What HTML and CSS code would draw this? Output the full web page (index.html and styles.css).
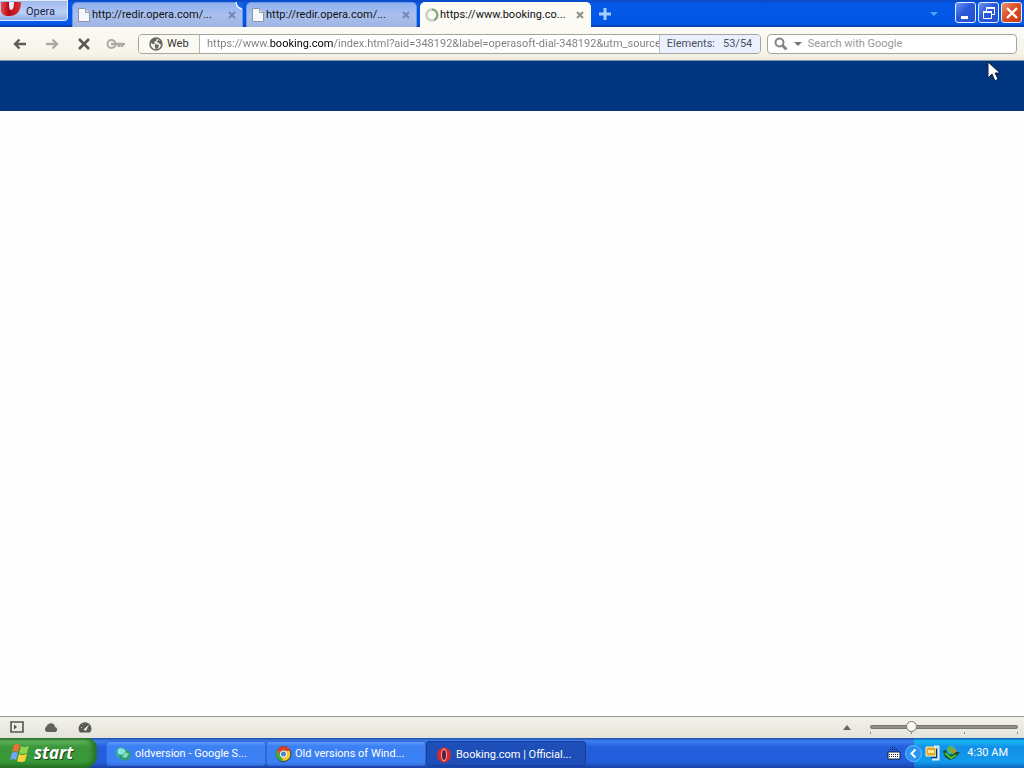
FILE: index.html
```html
<!DOCTYPE html>
<html lang="en">
<head>
<meta charset="utf-8">
<title>Booking.com | Official site</title>
<link rel="stylesheet" href="styles.css">
</head>
<body>
<header class="titlebar">
  <button class="opera-menu" type="button">
    <svg class="opera-mark" width="22" height="17" viewBox="0 0 22 17" aria-hidden="true"><defs><linearGradient id="red" x1="0" x2="1"><stop offset="0" stop-color="#e84a50"/><stop offset=".4" stop-color="#b80812"/><stop offset="1" stop-color="#de3038"/></linearGradient></defs><path d="M1 1H21C21 10 17 15 9 15C4 15 1 13 1 9Z" fill="url(#red)"/><path d="M9 1H14C14 6 13 9 11 9C9 9 9 5 9 1Z" fill="#e4ebfa"/></svg>
    <span>Opera</span>
  </button>
  <nav class="tabs" aria-label="Tabs">
    <div class="tab">
      <svg width="14" height="16" viewBox="0 0 14 16" aria-hidden="true"><path d="M1.500 1.500H8.500L12.500 5.500V14.500H1.500Z" fill="#f6f8fc" stroke="#8d95a4"/><path d="M8.500 1.500V5.500H12.500" fill="#d6dbe5" stroke="#9aa2b0"/></svg>
      <a class="tab-title" href="#">http://redir.opera.com/...</a>
      <button class="tab-close" type="button" aria-label="Close tab"><svg width="8" height="8" viewBox="0 0 8 8"><path d="M1 1L7 7M7 1L1 7" stroke="#7488b2" stroke-width="2"/></svg></button>
      <svg class="curl" width="8" height="8" viewBox="0 0 8 8" aria-hidden="true"><path d="M0 0C1 5 3 6 8 7V0Z" fill="#1760e0"/><path d="M1 0C1 4 3 6 7 7" fill="none" stroke="#eef4ff" stroke-width="1.500"/></svg>
    </div>
    <div class="tab">
      <svg width="14" height="16" viewBox="0 0 14 16" aria-hidden="true"><path d="M1.500 1.500H8.500L12.500 5.500V14.500H1.500Z" fill="#f6f8fc" stroke="#8d95a4"/><path d="M8.500 1.500V5.500H12.500" fill="#d6dbe5" stroke="#9aa2b0"/></svg>
      <a class="tab-title" href="#">http://redir.opera.com/...</a>
      <button class="tab-close" type="button" aria-label="Close tab"><svg width="8" height="8" viewBox="0 0 8 8"><path d="M1 1L7 7M7 1L1 7" stroke="#7488b2" stroke-width="2"/></svg></button>
    </div>
    <div class="tab tab-active">
      <svg width="14" height="16" viewBox="0 0 14 16" aria-hidden="true"><circle cx="7" cy="8" r="5.500" fill="none" stroke="#c9d2c4" stroke-width="2.500"/><path d="M7 2.500A5.500 5.500 0 0 1 9 13" fill="none" stroke="#86a37c" stroke-width="2"/></svg>
      <a class="tab-title" href="#">https://www.booking.co...</a>
      <button class="tab-close" type="button" aria-label="Close tab"><svg width="8" height="8" viewBox="0 0 8 8"><path d="M1 1L7 7M7 1L1 7" stroke="#8f8f8b" stroke-width="2"/></svg></button>
    </div>
  </nav>
  <button class="bare new-tab" type="button" aria-label="New tab"><svg width="12" height="12" viewBox="0 0 12 12"><path d="M6 0V12M0 6H12" stroke="#a8ccff" stroke-width="3"/></svg></button>
  <button class="bare closed-tabs" type="button" aria-label="Closed tabs"><svg width="8" height="4" viewBox="0 0 8 4"><path d="M0 0H8L4 4Z" fill="#4da1fb"/></svg></button>
  <div class="window-buttons">
    <button class="win" type="button" aria-label="Minimize"><svg width="18" height="18" viewBox="0 0 18 18"><path d="M4 12H11V15H4Z" fill="#fff"/></svg></button>
    <button class="win" type="button" aria-label="Restore"><svg width="18" height="18" viewBox="0 0 18 18"><path d="M6.500 7V4H14.500V10.500H12M3.500 8H11.500V14.500H3.500Z" fill="none" stroke="#fff"/><path d="M6 4H15M3 8H12" stroke="#fff" stroke-width="2"/></svg></button>
    <button class="win win-close" type="button" aria-label="Close"><svg width="18" height="18" viewBox="0 0 18 18"><path d="M4 4L14 14M14 4L4 14" stroke="#fff" stroke-width="2.400"/></svg></button>
  </div>
</header>

<div class="toolbar">
  <div class="nav-buttons">
    <button class="bare" type="button" aria-label="Back"><svg width="16" height="14" viewBox="0 0 16 14"><path d="M7.500 2.500L3 7L7.500 11.500M3 7H14" fill="none" stroke="#5c5c58" stroke-width="2.300"/></svg></button>
    <button class="bare" type="button" aria-label="Forward"><svg width="16" height="14" viewBox="0 0 16 14"><path d="M8.500 2.500L13 7L8.500 11.500M13 7H2" fill="none" stroke="#aaaaa4" stroke-width="2.300"/></svg></button>
    <button class="bare" type="button" aria-label="Stop"><svg width="16" height="14" viewBox="0 0 16 14"><path d="M3 2L13 12M13 2L3 12" stroke="#595955" stroke-width="2.600"/></svg></button>
    <button class="bare" type="button" aria-label="Wand"><svg width="20" height="12" viewBox="0 0 20 12"><circle cx="5.500" cy="6" r="4" fill="none" stroke="#aaaaa4" stroke-width="2"/><path d="M5 6H19M13 7V9M16 7V9" stroke="#aaaaa4" stroke-width="2.500"/></svg></button>
  </div>
  <div class="address">
    <button class="badge" type="button"><svg width="14" height="14" viewBox="0 0 14 14" aria-hidden="true"><circle cx="7" cy="7" r="6" fill="#f2f2ec" stroke="#666660" stroke-width="1.500"/><path d="M2 4L5 1L8 2L7 4L5 5L6 7L4 7L2 6ZM6 7L10 8L9 11L7 13L6 10ZM9 3L12 4L12 8L10 6L8 5Z" fill="#666660"/></svg><span>Web</span></button>
    <input class="url" type="text" aria-label="Address" value="https://www.booking.com/index.html?aid=348192&amp;label=operasoft-dial-348192&amp;utm_source=">
    <div class="progress"><span>Elements:</span><span>53/54</span></div>
  </div>
  <div class="search">
    <button class="bare engine" type="button" aria-label="Search engine"><svg width="28" height="14" viewBox="0 0 28 14"><circle cx="5.500" cy="5.500" r="4" fill="none" stroke="#858580" stroke-width="2"/><path d="M8 8L12.500 12.500" stroke="#858580" stroke-width="3"/><path d="M20 5H28L24 9Z" fill="#777772"/></svg></button>
    <input class="query" type="text" aria-label="Search with Google" placeholder="Search with Google">
  </div>
</div>

<main class="page"><div class="site-header"></div></main>

<footer class="statusbar">
  <button class="bare" type="button" aria-label="Panels"><svg width="14" height="12" viewBox="0 0 14 12"><path d="M1 1H13V11H1Z" fill="none" stroke="#555550" stroke-width="1.600"/><path d="M4 3.500L7 6L4 8.500Z" fill="#555550"/></svg></button>
  <button class="bare" type="button" aria-label="Opera Link"><svg width="14" height="12" viewBox="0 0 14 12"><path d="M3 11A3 3 0 0 1 2.500 5.500A4.500 4 0 0 1 10 3.500Q11 4 11 6A2.600 2.600 0 0 1 11.500 11Z" fill="#62625c"/></svg></button>
  <button class="bare" type="button" aria-label="Opera Turbo"><svg width="14" height="12" viewBox="0 0 14 12"><path d="M2 11.500A6.500 6.200 0 1 1 12 11.500Z" fill="#5b5b56"/><path d="M5.500 8.500L11 3.500L8 10Z" fill="#e9e8df"/><path d="M3 6.500H4M4.500 3.500L5 4" stroke="#c9c8bf"/></svg></button>
  <button class="bare view" type="button" aria-label="View"><svg width="8" height="5" viewBox="0 0 8 5"><path d="M0 5H8L4 0Z" fill="#66665f"/></svg></button>
  <input class="zoom" type="range" min="0" max="100" value="26" aria-label="Zoom">
</footer>

<div class="taskbar">
  <button class="start" type="button"><svg width="20" height="18" viewBox="0 0 20 18" aria-hidden="true"><path d="M4 1Q7 -1 10 1L8 8Q5 6 2 8Z" fill="#f06b38"/><path d="M11 2Q15 4 19 2L17 9Q13 11 9 9Z" fill="#91d34f"/><path d="M2 9Q5 7 8 9L6 16Q3 14 0 16Z" fill="#6ea5fa"/><path d="M9 10Q12 12 17 10L15 17Q11 19 7 17Z" fill="#fbd13c"/></svg><span>start</span></button>
  <div class="tasks">
    <button class="task" type="button"><svg width="17" height="16" viewBox="0 0 17 16" aria-hidden="true"><ellipse cx="6" cy="7" rx="5.500" ry="6" fill="#39a8a8"/><ellipse cx="10" cy="9" rx="6" ry="5.500" fill="#2e9c7c"/><path d="M3 3Q8 1 11 5L7 9L3 8Z" fill="#8ce4dc"/><path d="M10 6L14 8L11 12L7 11Z" fill="#7fdcb9"/></svg><span>oldversion - Google S...</span></button>
    <button class="task" type="button"><svg width="17" height="16" viewBox="0 0 17 16" aria-hidden="true"><circle cx="8.500" cy="8" r="7.500" fill="#f4c928" stroke="#263a35"/><path d="M2 4A7.500 7.500 0 0 1 15.500 5H8.500L5 9Z" fill="#d84331"/><path d="M2 4L7 12L8.500 15A7 7 0 0 1 2 4Z" fill="#43a84a"/><circle cx="8.500" cy="8" r="3.500" fill="#f4f6ef"/><circle cx="8.500" cy="8" r="2.500" fill="#4c83cc"/></svg><span>Old versions of Wind...</span></button>
    <button class="task task-active" type="button"><svg width="17" height="16" viewBox="0 0 17 16" aria-hidden="true"><ellipse cx="8" cy="8" rx="7" ry="7.500" fill="#d52c2a"/><ellipse cx="8" cy="8" rx="3" ry="6.500" fill="#f1a49b"/><ellipse cx="8" cy="8" rx="2" ry="5" fill="#5a1c47"/></svg><span>Booking.com | Official...</span></button>
  </div>
  <button class="bare language" type="button" aria-label="On-screen keyboard"><svg width="14" height="14" viewBox="0 0 14 14"><path d="M1 6H13V13H1Z" fill="#fff" stroke="#151d39"/><path d="M3 3.500H11M5 1.500H9" stroke="#151d39" stroke-dasharray="1 1"/><path d="M2 8.500H12M2 10.500H12" stroke="#151d39" stroke-dasharray="1 1"/></svg></button>
  <div class="tray">
    <button class="bare expand" type="button" aria-label="Show hidden icons"><svg width="17" height="17" viewBox="0 0 17 17"><circle cx="8.500" cy="8.500" r="8" fill="#2994f4" stroke="#65c0ff"/><path d="M10.500 4.500L6.500 8.500L10.500 12.500" stroke="#fff" fill="none" stroke-width="2"/></svg></button>
    <svg width="17" height="16" viewBox="0 0 17 16" aria-hidden="true"><path d="M2 2H12V11H2Z" fill="#e2a72f" stroke="#fff3bd"/><path d="M4 5H10V8H4Z" fill="#ffe89a"/><path d="M10 1.500H14.500V14.500H8" fill="none" stroke="#e1edff" stroke-width="2"/><path d="M12.500 4V12.500H7" fill="none" stroke="#182f59"/></svg>
    <svg width="17" height="16" viewBox="0 0 17 16" aria-hidden="true"><path d="M0 6L5 4L12 7L17 7L12 13L7 15L2 12Z" fill="#174f2b"/><circle cx="8" cy="5" r="4.500" fill="#429de0"/><path d="M5 2L9 1L12 5L9 9L5 6Z" fill="#61b83e"/><path d="M9 4L14 5L11 9Z" fill="#d78629"/><path d="M2 8L8 13L13 10" fill="none" stroke="#49c63b" stroke-width="2"/></svg>
    <time>4:30 AM</time>
  </div>
</div>
<svg class="cursor" width="14" height="21" viewBox="0 0 14 21" aria-hidden="true"><path d="M1 1V17L5 13L8 20L11 18L8 12H13Z" fill="#fff" stroke="#15213e"/></svg>
</body>
</html>
```

FILE: styles.css
```css
* { box-sizing: border-box; }
body {
  margin: 0;
  min-height: 100vh;
  display: flex;
  flex-direction: column;
  font: 11px/16px Roboto, sans-serif;
  background: #fefefe;
}
button, input { font: inherit; margin: 0; }
button { padding: 0; }
svg { display: block; flex: none; }
.bare { border: 0; background: none; display: flex; align-items: center; justify-content: center; }

.titlebar {
  display: flex;
  align-items: flex-start;
  height: 27px;
  padding-right: 2px;
  background: linear-gradient(#0a49c4, #0458e6 4px, #0357e8 24px, #063b9b);
}
.opera-menu {
  display: flex;
  align-items: flex-start;
  gap: 4px;
  width: 68px;
  height: 21px;
  margin-right: 4px;
  color: #14234c;
  border: 1px solid #e0eaff;
  border-width: 1px 1px 1px 0;
  border-radius: 0 0 4px 0;
  background: linear-gradient(#9fb9ec, #bdd0f4 60%, #8eabe4);
}
.opera-menu span { padding-top: 3px; }
.tabs { display: flex; gap: 3px; align-self: stretch; padding-top: 2px; }
.tab {
  position: relative;
  display: flex;
  align-items: center;
  width: 171px;
  padding: 0 4px;
  gap: 1px;
  border: 1px solid #6c95e4;
  border-bottom: 0;
  border-radius: 5px 5px 0 0;
  background: linear-gradient(#8fb0f0, #a9c0ef 50%, #9fb4e0);
}
.tab-active { background: #fbfaf5; border-color: #fbfaf5; }
.tab-title { flex: 1; min-width: 0; white-space: nowrap; overflow: hidden; color: #111; text-decoration: none; }
.tab-close { display: grid; place-items: center; width: 12px; height: 14px; border: 0; background: none; }
.curl { position: absolute; right: -1px; top: -1px; }
.new-tab { width: 28px; height: 27px; }
.closed-tabs { width: 20px; height: 27px; margin-left: auto; }
.window-buttons { display: flex; gap: 2px; padding: 2px 0 0 11px; }
.win {
  display: grid;
  place-items: center;
  width: 21px;
  height: 21px;
  border: 1px solid #e4edff;
  border-radius: 3px;
  background: linear-gradient(135deg, #6d92f2, #2858dc 45%, #2450cc);
}
.win-close { background: linear-gradient(135deg, #ee9273, #df4f26 45%, #c63b16); }

.toolbar {
  display: flex;
  align-items: center;
  gap: 6px;
  height: 34px;
  padding: 0 7px 0 4px;
  background: linear-gradient(#fbfaf5, #f6f4ea 80%, #efe9d9);
  border-bottom: 1px solid #7b94b4;
}
.nav-buttons { display: flex; width: 128px; }
.nav-buttons .bare { width: 32px; height: 24px; }
.address {
  flex: 5 1 0;
  min-width: 0;
  display: flex;
  height: 20px;
  border: 1px solid #a5a59e;
  border-radius: 4px;
  background: #fff;
  overflow: hidden;
}
.badge {
  display: flex;
  align-items: center;
  gap: 4px;
  width: 61px;
  padding-left: 10px;
  color: #333;
  border: 0;
  border-right: 1px solid #b3b3ac;
  background: #faf9f2;
}
.url {
  flex: 1;
  min-width: 0;
  padding: 1px 0 0 7px;
  border: 0;
  outline: 0;
  color: #7c7c7c;
  -webkit-text-fill-color: transparent;
  background: linear-gradient(90deg, #7c7c7c 69px, #000 69px, #000 134px, #7c7c7c 134px);
  -webkit-background-clip: text;
  background-clip: text;
}
.progress {
  display: flex;
  align-items: center;
  gap: 8px;
  width: 101px;
  padding: 1px 0 0 7px;
  color: #4a5061;
  background: #eaf0fe;
  border-left: 1px solid #bac0ce;
}
.search {
  flex: 2 1 0;
  min-width: 0;
  display: flex;
  height: 20px;
  border: 1px solid #a5a59e;
  border-radius: 4px;
  background: #fff;
}
.engine { width: 40px; }
.query { flex: 1; min-width: 0; padding: 1px 0 0; border: 0; outline: 0; background: none; color: #333; }
.query::placeholder { color: #989898; opacity: 1; }

.page { flex: 1; background: #fefefe; }
.site-header { height: 50px; background: #003580; }

.statusbar {
  display: flex;
  align-items: center;
  height: 22px;
  padding: 0 6px 1px 0;
  border-top: 1px solid #989890;
  background: linear-gradient(#f3f2ea, #e5e4da);
}
.statusbar .bare { width: 34px; height: 20px; }
.statusbar .view { margin-left: auto; margin-right: 6px; }
.zoom {
  appearance: none;
  width: 148px;
  height: 20px;
  margin: 0;
  background:
    linear-gradient(#888, #888) 0 15px / 1px 2px no-repeat,
    linear-gradient(#888, #888) 41px 15px / 1px 2px no-repeat,
    linear-gradient(#888, #888) 94px 15px / 1px 2px no-repeat,
    linear-gradient(#888, #888) 147px 15px / 1px 2px no-repeat;
}
.zoom::-webkit-slider-runnable-track { height: 4px; border: 1px solid #77776f; border-radius: 2px; background: #8f8e83; }
.zoom::-webkit-slider-thumb { appearance: none; width: 11px; height: 11px; margin-top: -5px; border: 1px solid #777770; border-radius: 50%; background: #faf9f4; }

.taskbar {
  display: flex;
  height: 30px;
  color: #fff;
  background: linear-gradient(#1d4ca9, #3c80f0 3px, #245edc 9px, #245edc 24px, #1941a5);
}
.start {
  display: flex;
  align-items: center;
  gap: 4px;
  width: 97px;
  padding-left: 10px;
  border: 0;
  border-radius: 0 10px 12px 0;
  color: #fff;
  font: italic bold 17px/20px "Open Sans", sans-serif;
  text-shadow: 1px 1px 1px #174317;
  background: linear-gradient(#2d6d2c, #5eb35c 3px, #3c963b 9px, #379936 24px, #246d24);
  box-shadow: inset -4px 0 5px #267126;
}
.tasks { display: flex; padding: 3px 0 2px 9px; }
.task {
  display: flex;
  align-items: center;
  gap: 3px;
  width: 160px;
  padding-left: 8px;
  border: 1px solid #3267d5;
  border-radius: 3px;
  color: #fff;
  white-space: nowrap;
  background: linear-gradient(#619bff, #3c81f3 4px, #3c81f3 20px, #3571df);
}
.task-active { border-color: #173f99; padding: 2px 0 0 9px; background: #1e4eb7; }
.language { width: 22px; margin-left: auto; margin-right: 9px; }
.tray {
  display: flex;
  align-items: center;
  gap: 2px;
  min-width: 110px;
  padding-right: 16px;
  background: linear-gradient(#0c59b9, #18b9f5 3px, #128fe7 9px, #129bec 24px, #0c65bd);
}
.expand { margin-left: -9px; }
.tray time { margin-left: auto; }
.cursor { position: absolute; left: 987px; top: 61px; }
```
